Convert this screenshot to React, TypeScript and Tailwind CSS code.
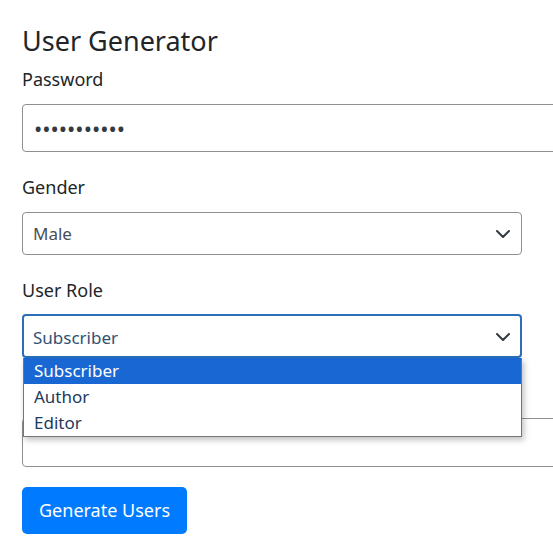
const font = { fontFamily: '"Noto Sans", "Open Sans", Arial, sans-serif' };

function Chevron() {
    return (
        <svg width="14" height="8" viewBox="0 0 14 8" className="text-[#343a40]">
            <path d="M1 1l6 6 6-6" fill="none" stroke="currentColor" strokeWidth="2" strokeLinecap="round" strokeLinejoin="round" />
        </svg>
    );
}

const roles = ["Subscriber", "Author", "Editor"];

export default function App() {
    return (
        <div className="w-full min-h-[560px] overflow-hidden bg-white text-[#212529]" style={font}>
            <div className="w-[620px] pl-[22px] pt-[25px]">
                {/* HEADING */}
                <h3 className="text-[27px] leading-[1.2] font-normal mb-[7px]">User Generator</h3>

                {/* PASSWORD */}
                <div className="mb-[20px]">
                    <label className="block text-[18px] leading-[30px] mb-[10px]">Password</label>
                    <input
                        type="password"
                        readOnly
                        value="password123"
                        className="block w-full h-[48px] px-[11px] text-[22px] text-[#343a40] border border-[#8f8f8f] rounded-[4px] outline-none"
                    />
                </div>

                {/* GENDER */}
                <div className="mb-[20px]">
                    <label className="block text-[18px] leading-[30px] mb-[10px]">Gender</label>
                    <div className="w-[500px] h-[43px] flex items-center justify-between pl-[10px] pr-[11px] border border-[#8f8f8f] rounded-[4px] text-[17px] text-[#495057]">
                        <span>Male</span>
                        <Chevron />
                    </div>
                </div>

                {/* USER ROLE (open) */}
                <div className="mb-[60px] relative">
                    <label className="block text-[18px] leading-[30px] mb-[9px]">User Role</label>
                    <div className="w-[500px] h-[44px] flex items-center justify-between pl-[9px] pr-[10px] pt-[2px] border-2 border-[#2a6fb8] rounded-[4px] text-[17px] text-[#2f5273]">
                        <span>Subscriber</span>
                        <Chevron />
                    </div>

                    {/* DROPDOWN LIST */}
                    <ul className="absolute left-[1px] top-[83px] z-20 w-[499px] bg-white border border-[#767676] border-t-0 shadow-[2px_3px_6px_rgba(0,0,0,0.25)] text-[17px]">
                        {roles.map((r, i) => (
                            <li
                                key={r}
                                className={
                                    i === 0
                                        ? "h-[26px] leading-[26px] pl-[10px] bg-[#1967d2] text-white"
                                        : "h-[26px] leading-[26px] pl-[10px] text-[#1d3a5c]"
                                }
                            >
                                {r}
                            </li>
                        ))}
                    </ul>
                </div>

                {/* FIELD UNDER THE OPEN LIST */}
                <div className="mb-[20px]">
                    <input
                        type="text"
                        readOnly
                        className="block w-full h-[49px] px-[11px] text-[20px] border border-[#8f8f8f] rounded-[4px] outline-none"
                    />
                </div>

                {/* SUBMIT */}
                <button className="h-[47px] px-[17px] rounded-[5px] bg-[#007bff] text-white text-[18px]">
                    Generate Users
                </button>
            </div>
        </div>
    );
}
